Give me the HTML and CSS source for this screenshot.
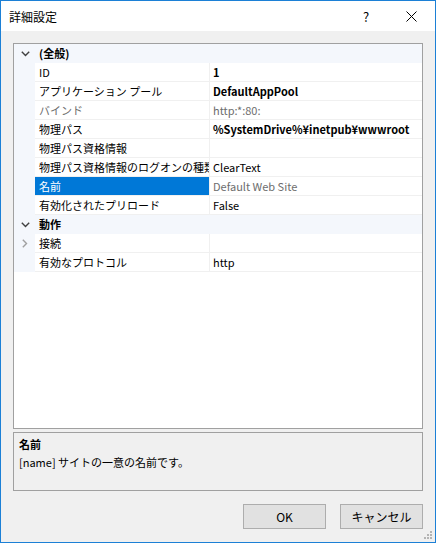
FILE: index.html
```html
<!DOCTYPE html>
<html lang="ja">
<head>
<meta charset="utf-8">
<title>詳細設定</title>
<link rel="stylesheet" href="styles.css">
</head>
<body>
<div class="window">
  <div class="titlebar">
    <span class="title">詳細設定</span>
    <span class="help">?</span>
    <span class="close">
      <svg width="11" height="11" viewBox="0 0 11 11"><path d="M0.5 0.5L10.5 10.5M10.5 0.5L0.5 10.5" stroke="#000" stroke-width="1" fill="none"/></svg>
    </span>
  </div>
  <div class="content">
    <div class="propgrid">
      <div class="row cat">
        <span class="gut"><svg class="chev" width="9" height="6" viewBox="0 0 9 6"><path d="M0.8 0.8L4.5 4.5L8.2 0.8" stroke="#404040" stroke-width="1.4" fill="none"/></svg></span>
        <span class="cattext">(全般)</span>
      </div>
      <div class="row"><span class="gut"></span><span class="name">ID</span><span class="val b">1</span></div>
      <div class="row"><span class="gut"></span><span class="name">アプリケーション プール</span><span class="val b">DefaultAppPool</span></div>
      <div class="row"><span class="gut"></span><span class="name dis">バインド</span><span class="val dis">http:*:80:</span></div>
      <div class="row"><span class="gut"></span><span class="name">物理パス</span><span class="val b">%SystemDrive%¥inetpub¥wwwroot</span></div>
      <div class="row"><span class="gut"></span><span class="name">物理パス資格情報</span><span class="val"></span></div>
      <div class="row"><span class="gut"></span><span class="name">物理パス資格情報のログオンの種類</span><span class="val">ClearText</span></div>
      <div class="row"><span class="gut"></span><span class="name sel">名前</span><span class="val dis">Default Web Site</span></div>
      <div class="row"><span class="gut"></span><span class="name">有効化されたプリロード</span><span class="val">False</span></div>
      <div class="row cat">
        <span class="gut"><svg class="chev" width="9" height="6" viewBox="0 0 9 6"><path d="M0.8 0.8L4.5 4.5L8.2 0.8" stroke="#404040" stroke-width="1.4" fill="none"/></svg></span>
        <span class="cattext">動作</span>
      </div>
      <div class="row"><span class="gut"><svg class="chevr" width="6" height="9" viewBox="0 0 6 9"><path d="M0.8 0.8L4.5 4.5L0.8 8.2" stroke="#a0a0a0" stroke-width="1.4" fill="none"/></svg></span><span class="name">接続</span><span class="val"></span></div>
      <div class="row"><span class="gut"></span><span class="name">有効なプロトコル</span><span class="val">http</span></div>
      <div class="rest"></div>
    </div>
    <div class="desc">
      <div class="desc-title">名前</div>
      <div class="desc-text">[name] サイトの一意の名前です。</div>
    </div>
    <div class="buttons">
      <button class="btn">OK</button>
      <button class="btn">キャンセル</button>
    </div>
  </div>
  <div class="grip">
    <svg width="10" height="10" viewBox="0 0 10 10" fill="#b4b4b4">
      <rect x="7" y="1" width="2" height="2"/>
      <rect x="4" y="4" width="2" height="2"/><rect x="7" y="4" width="2" height="2"/>
      <rect x="1" y="7" width="2" height="2"/><rect x="4" y="7" width="2" height="2"/><rect x="7" y="7" width="2" height="2"/>
    </svg>
  </div>
</div>
</body>
</html>
```

FILE: styles.css
```css
* { box-sizing: border-box; }
html, body { margin: 0; padding: 0; }
body {
  font-family: "Noto Sans CJK JP", "Noto Sans", sans-serif;
  font-size: 12px;
  color: #000;
  background: #f0f0f0;
}
.window {
  position: relative;
  width: 436px;
  height: 543px;
  border: 1px solid #1c80d6;
  background: #f0f0f0;
  display: flex;
  flex-direction: column;
}
.titlebar {
  height: 30px;
  background: #fff;
  display: flex;
  align-items: center;
  flex: none;
}
.title {
  padding-left: 8px;
  font-size: 12px;
  flex: 1;
}
.help {
  width: 14px;
  margin-right: 33px;
  font-size: 13px;
  text-align: center;
}
.close {
  width: 11px;
  height: 11px;
  margin-right: 18px;
  display: flex;
}
.content {
  flex: 1;
  padding: 12px 12px 0 12px;
  display: flex;
  flex-direction: column;
}
.propgrid {
  height: 386px;
  border: 1px solid #a0a0a0;
  background: #fff;
  display: flex;
  flex-direction: column;
  font-size: 11px;
}
.row {
  display: grid;
  grid-template-columns: 21px 175px 1fr;
  height: 19px;
  flex: none;
}
.row > span {
  height: 19px;
  line-height: 18px;
  white-space: nowrap;
  overflow: hidden;
  text-overflow: clip;
}
.gut {
  background: #f4f7fc;
  display: flex;
  align-items: center;
  justify-content: center;
}
.name {
  padding-left: 4px;
  border-right: 1px solid #f0f0f0;
  border-bottom: 1px solid #f0f0f0;
}
.val {
  padding-left: 3px;
  border-bottom: 1px solid #f0f0f0;
}
.b { font-weight: bold; }
.dis { color: #6d6d6d; }
.name.sel {
  background: #0078d7;
  color: #fff;
}
.cat {
  background: #f4f7fc;
  grid-template-columns: 21px 1fr;
}
.cattext {
  padding-left: 4px;
  font-weight: bold;
}
.chev { margin-left: 1px; margin-top: 1px; }
.chevr { margin-left: 1px; }
.rest {
  flex: 1;
}
.desc {
  margin-top: 3px;
  height: 59px;
  border: 1px solid #a0a0a0;
  background: #f0f0f0;
  padding: 2px 5px;
  font-size: 11px;
}
.desc-title {
  font-weight: bold;
  line-height: 18px;
}
.desc-text {
  line-height: 18px;
}
.buttons {
  margin-top: 13px;
  display: flex;
  justify-content: flex-end;
  gap: 14px;
}
.btn {
  width: 83px;
  height: 25px;
  background: #e1e1e1;
  border: 1px solid #adadad;
  font-family: "Noto Sans CJK JP", "Noto Sans", sans-serif;
  font-size: 12px;
  color: #000;
  padding: 0;
}
.grip {
  position: absolute;
  right: 2px;
  bottom: 2px;
  width: 10px;
  height: 10px;
  display: flex;
}
```
